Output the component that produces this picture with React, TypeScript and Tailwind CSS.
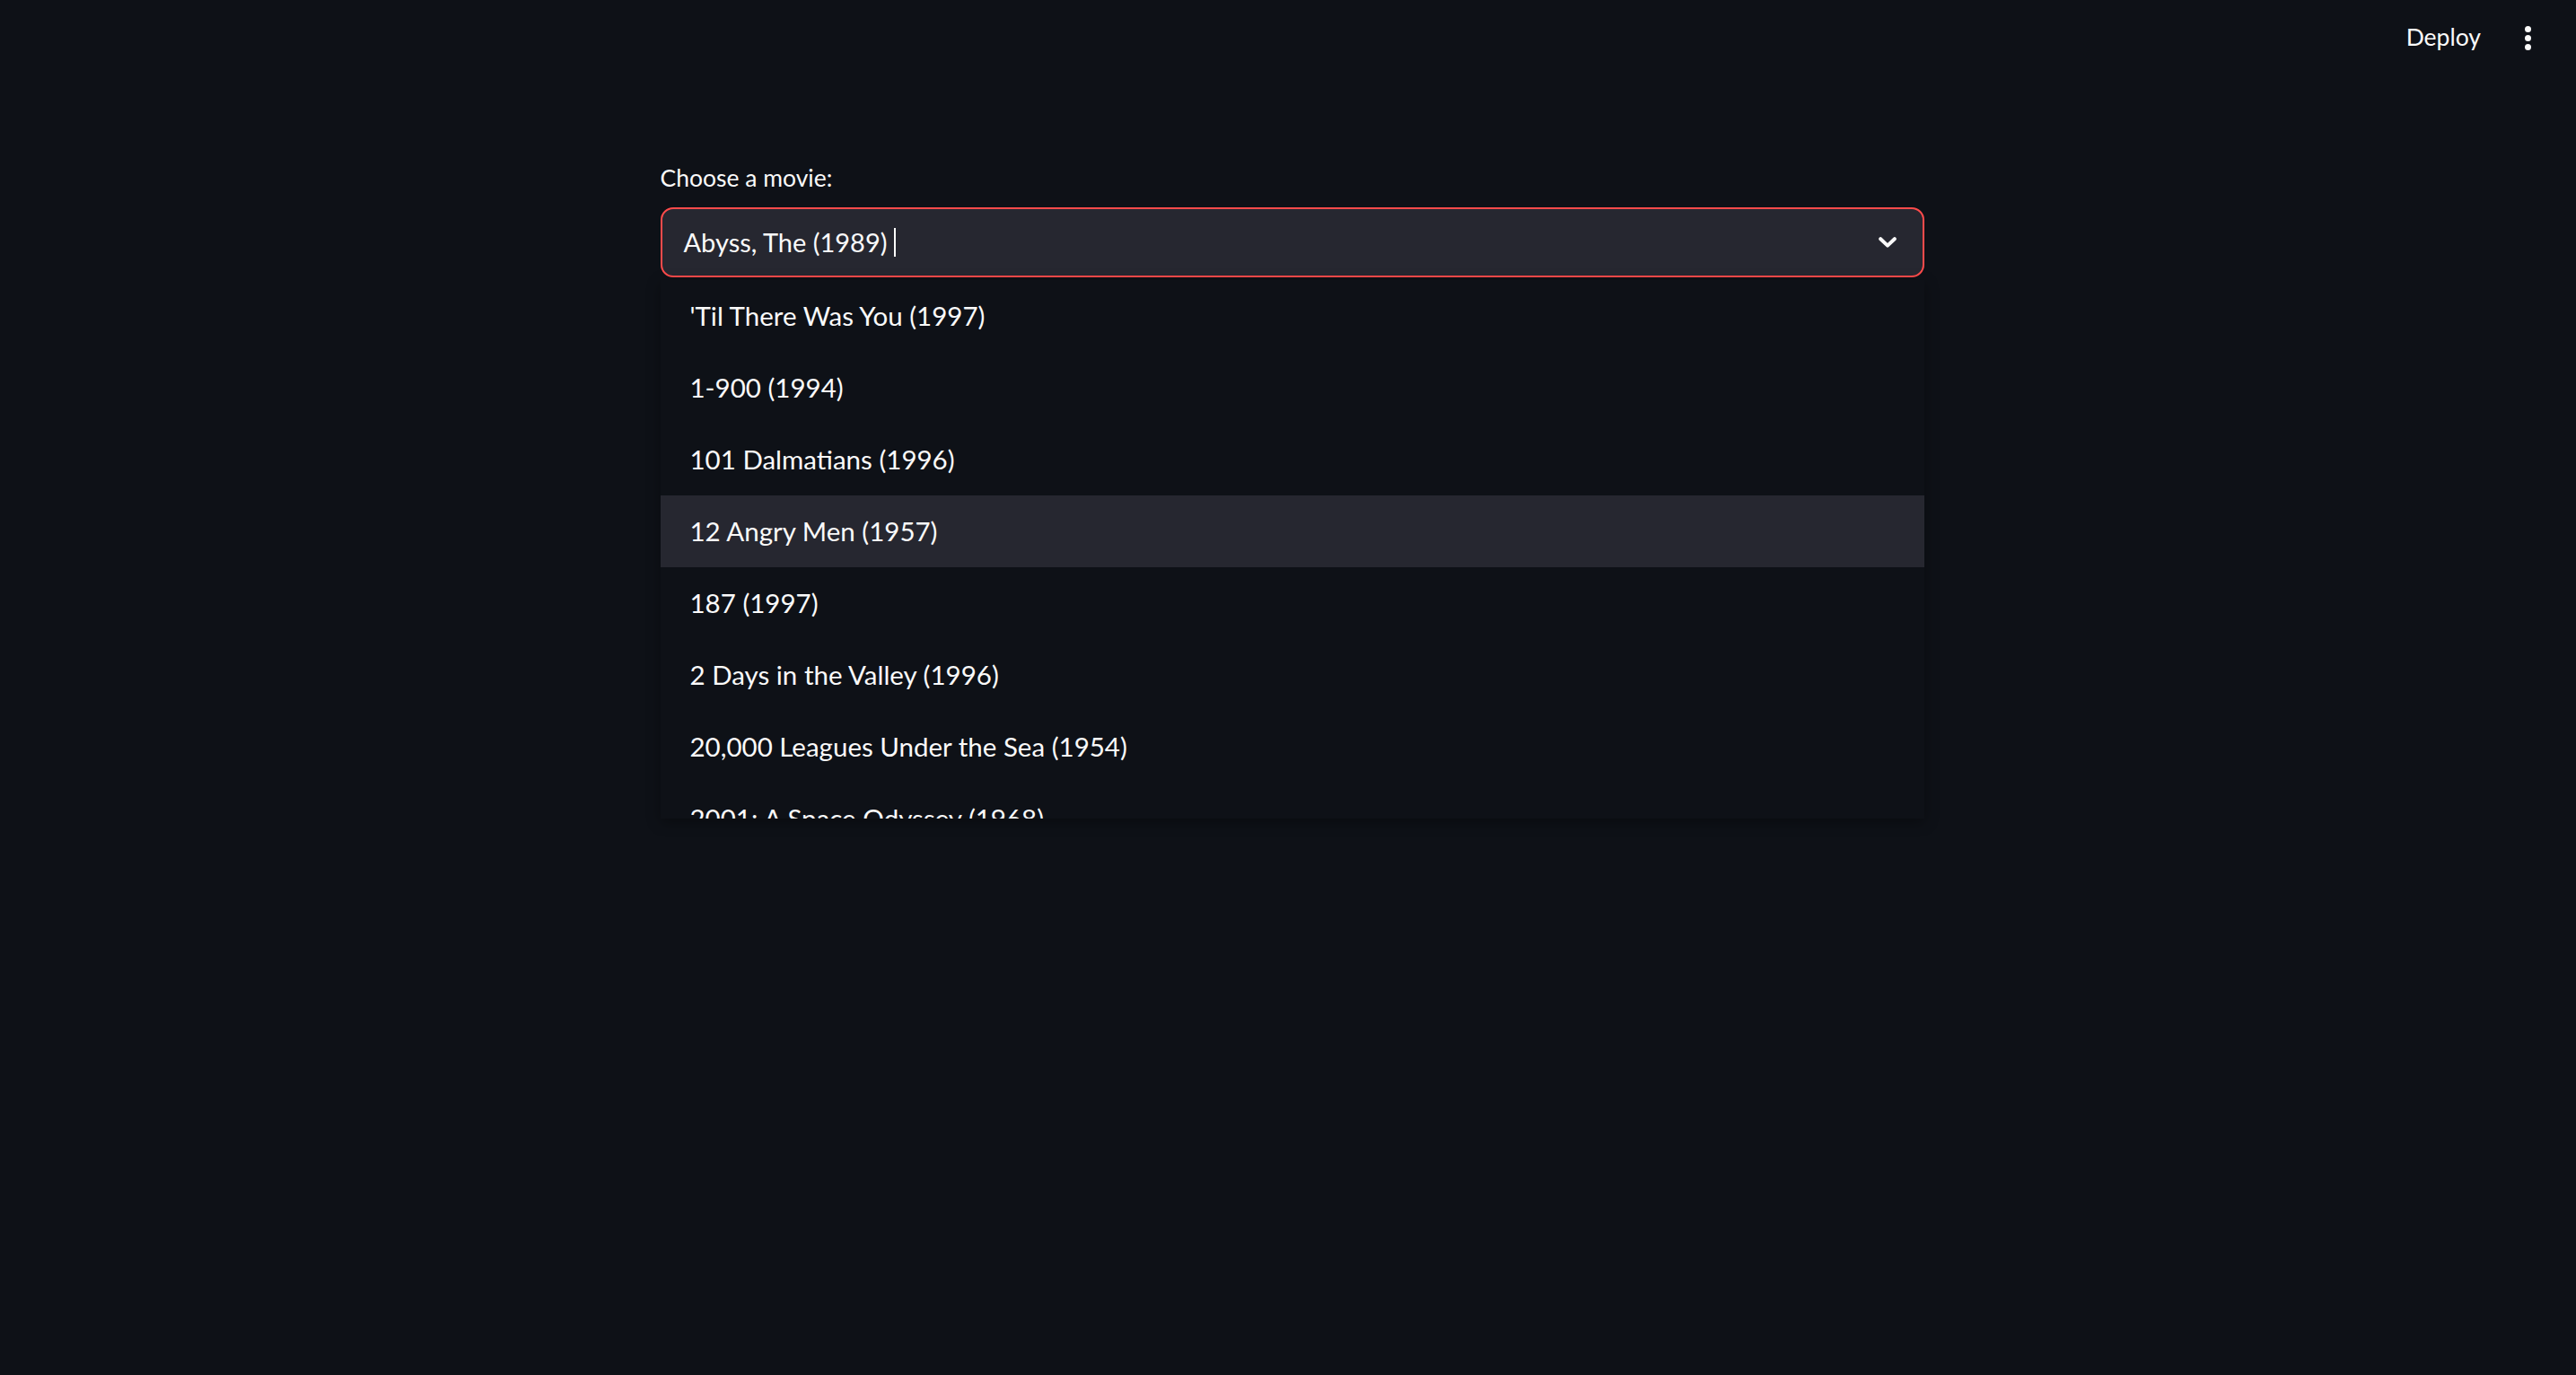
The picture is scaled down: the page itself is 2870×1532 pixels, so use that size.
import React from 'react';

const movies = [
  "'Til There Was You (1997)",
  '1-900 (1994)',
  '101 Dalmatians (1996)',
  '12 Angry Men (1957)',
  '187 (1997)',
  '2 Days in the Valley (1996)',
  '20,000 Leagues Under the Sea (1954)',
  '2001: A Space Odyssey (1968)',
];

const Header: React.FC = () => (
  <header className="flex h-[84px] items-center justify-end gap-[49px] pr-[50px]">
    <span className="text-[26.5px] text-[#fafafa]">Deploy</span>
    <div className="flex flex-col items-center gap-[3px]">
      <span className="h-[7px] w-[7px] rounded-full bg-[#fafafa]" />
      <span className="h-[7px] w-[7px] rounded-full bg-[#fafafa]" />
      <span className="h-[7px] w-[7px] rounded-full bg-[#fafafa]" />
    </div>
  </header>
);

const MovieSelect: React.FC = () => {
  const highlighted = 3;
  return (
    <div className="w-[1408px]">
      <label className="block h-[36px] leading-[36px] text-[26.5px] text-[#fafafa]">Choose a movie:</label>
      <div className="mt-[15px] flex h-[78px] items-center rounded-[14px] border-2 border-[#ff4b4b] bg-[#262730] pl-[24px] pr-[29px]">
        <div className="flex flex-1 items-center gap-[8px]">
          <span className="text-[29px] text-[#fafafa]">Abyss, The (1989)</span>
          <span className="h-[32px] w-[2px] bg-[#fafafa]" />
        </div>
        <svg width="20" height="12" viewBox="0 0 20 12" fill="none">
          <path d="M2.2 2.2 L10 9.6 L17.8 2.2" stroke="#fafafa" strokeWidth="4" strokeLinecap="round" strokeLinejoin="round" />
        </svg>
      </div>
      <ul className="mt-[3px] h-[600px] overflow-hidden bg-[#0e1117] shadow-[0_4px_14px_rgba(0,0,0,0.35)]">
        {movies.map((movie, i) => (
          <li
            key={movie}
            className={`flex h-[80px] items-center px-[33px] text-[29.5px] text-[#fafafa] ${i === highlighted ? 'bg-[#262730]' : ''}`}
          >
            {movie}
          </li>
        ))}
      </ul>
    </div>
  );
};

const App: React.FC = () => {
  return (
    <div className="min-h-[1532px] w-full bg-[#0e1117] font-['Lato',sans-serif]">
      <Header />
      <main className="flex justify-center pl-[9px] pt-[96px]">
        <MovieSelect />
      </main>
    </div>
  );
};

export default App;
